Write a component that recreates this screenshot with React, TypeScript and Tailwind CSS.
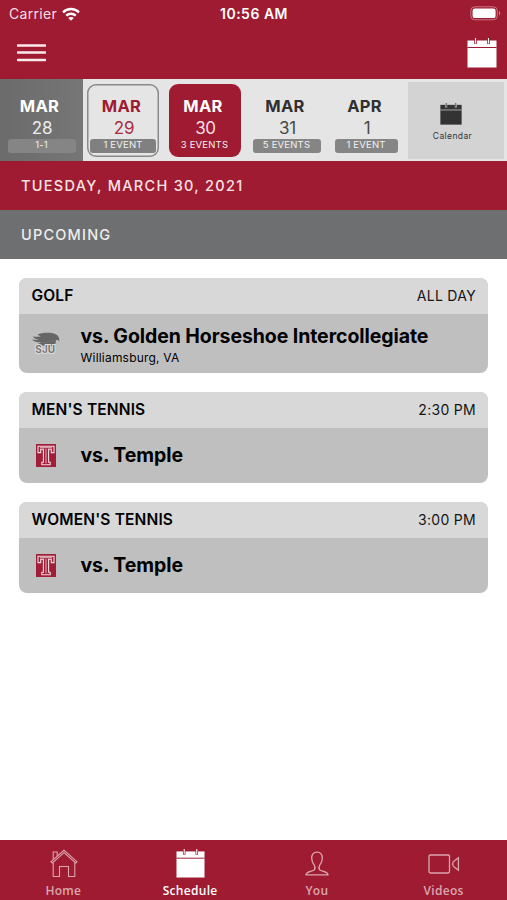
type Day = {
  month: string;
  day: string;
  label: string;
  cell: string;
  box: string;
  monthColor: string;
  dayColor: string;
  badge: string;
};

const days: Day[] = [
  {
    month: "MAR",
    day: "28",
    label: "1-1",
    cell: "w-[83px] bg-linear-to-r from-[#6b6b6b] to-[#767676]",
    box: "w-[72px]",
    monthColor: "text-white",
    dayColor: "text-[#ececec]",
    badge: "w-[68px] ml-px bg-[#858585]",
  },
  {
    month: "MAR",
    day: "29",
    label: "1 EVENT",
    cell: "w-[81px]",
    box: "w-[72px] rounded-[9px] inset-ring-[1.5px] inset-ring-[#8a8a8a]",
    monthColor: "text-[#9e1b32]",
    dayColor: "text-[#a52e42]",
    badge: "w-[66px] bg-[#808080]",
  },
  {
    month: "MAR",
    day: "30",
    label: "3 EVENTS",
    cell: "w-[82px]",
    box: "w-[72px] rounded-[9px] bg-[#9e1b32]",
    monthColor: "text-white",
    dayColor: "text-[#f6dfe2]",
    badge: "w-[66px]",
  },
  {
    month: "MAR",
    day: "31",
    label: "5 EVENTS",
    cell: "w-[82px]",
    box: "w-[72px]",
    monthColor: "text-[#303030]",
    dayColor: "text-[#484848]",
    badge: "w-[68px] bg-[#858585]",
  },
  {
    month: "APR",
    day: "1",
    label: "1 EVENT",
    cell: "w-[77px]",
    box: "w-[72px]",
    monthColor: "text-[#303030]",
    dayColor: "text-[#484848]",
    badge: "w-[63px] bg-[#858585]",
  },
];

const events = [
  {
    sport: "GOLF",
    time: "ALL DAY",
    title: "vs. Golden Horseshoe Intercollegiate",
    place: "Williamsburg, VA",
    logo: "hawk",
  },
  { sport: "MEN'S TENNIS", time: "2:30 PM", title: "vs. Temple", logo: "temple" },
  { sport: "WOMEN'S TENNIS", time: "3:00 PM", title: "vs. Temple", logo: "temple" },
];

const CalendarIcon = ({ className, line }: { className: string; line: string }) => (
  <svg viewBox="0 0 30 30" className={className}>
    <path d="M0.5 2.5H29.5V29.5H0.5Z" fill="currentColor" />
    <path d="M0.5 9.5H29.5" stroke={line} strokeWidth="1" />
    <path d="M8.5 1V6M21.5 1V6" stroke={line} strokeWidth="2.6" />
    <path d="M8.5 0V5.5M21.5 0V5.5" stroke="currentColor" strokeWidth="1.1" />
  </svg>
);

const TempleLogo = () => (
  <svg viewBox="0 0 20 23" className="ml-[17px] h-[23px] w-5">
    <rect width="20" height="23" rx="0.5" fill="#a11d38" />
    <path
      d="M2 2.2H18V8.6H15.3V5.2H12.6V18.2H14.2V20.8H5.8V18.2H7.4V5.2H4.7V8.6H2Z"
      fill="none"
      stroke="#f3dfe2"
      strokeWidth="1.1"
    />
    <path d="M4 3.7H16M10 5V19.3" stroke="#f3dfe2" strokeWidth="0.8" />
  </svg>
);

const HawkLogo = () => (
  <svg viewBox="0 0 28 22" className="ml-[13px] h-[22px] w-7">
    <path
      d="M5.5 2.6C9 .6 16.5.3 21 1.2C25 2 27.8 4.5 27.3 9.5C26.4 8 25 7.7 23.7 8.1C24.5 9.7 23.6 11.5 22 14.5C16 14 9 13.4 4.5 12.4C7 11.5 8.4 11 9.2 10.3C5.5 10.5 1.5 9.5 0 7.5C3 8 5.3 7.8 6.8 7.2C4 7 1 6 1.2 4.4C4 5.2 7 4.8 9 4.3C7.5 4 6.2 3.4 5.5 2.6Z"
      fill="#666"
    />
    <path d="M10 10.8C14 10.8 17 9 22 9" stroke="#7c7c7c" strokeWidth="0.6" fill="none" />
    <text
      x="13.2"
      y="20.6"
      textAnchor="middle"
      fontSize="10"
      fontWeight="700"
      fill="#777"
      stroke="#dcdcdc"
      strokeWidth="2"
      paintOrder="stroke"
      textLength="20"
    >
      SJU
    </text>
  </svg>
);

const HomeIcon = () => (
  <svg viewBox="0 0 28 30" className="ml-[2px] h-[30px] w-7" fill="none" stroke="currentColor" strokeWidth="1.1">
    <path d="M1 12.7L14 1.3L27 12.7L25.7 13.9L14 3.7L2.3 13.9Z" />
    <path d="M3.2 10.3V3H7.2V6.9" />
    <path d="M3.2 13.5V27.5H9.5V17.5H18.5V27.5H24.8V13.5" />
  </svg>
);

const PersonIcon = () => (
  <svg viewBox="0 0 24 26" className="h-[26px] w-6" fill="none" stroke="currentColor" strokeWidth="1.3">
    <path d="M12 1.2C8.3 1.2 6.6 3.8 6.7 7.2C6.8 10.3 7.8 12.4 9.2 14C10 15.3 10.2 17.6 9.3 18.8C8 20.4 1.2 20.2 1 23.8H23C22.8 20.2 16 20.4 14.7 18.8C13.8 17.6 14 15.3 14.8 14C16.2 12.4 17.2 10.3 17.3 7.2C17.4 3.8 15.7 1.2 12 1.2Z" />
  </svg>
);

const VideoIcon = () => (
  <svg viewBox="0 0 32 20" className="h-5 w-8" fill="none" stroke="currentColor" strokeWidth="1.3">
    <rect x="1" y="1" width="20.5" height="18" rx="1.4" />
    <path d="M30.4 3.8V16.2L26.2 13C24.2 12 24.2 8 26.2 7Z" />
  </svg>
);

const tabs = [
  { name: "Home", icon: <HomeIcon />, active: false },
  {
    name: "Schedule",
    icon: <CalendarIcon className="mb-px h-[29px] w-[29px]" line="#9e1b32" />,
    active: true,
  },
  { name: "You", icon: <PersonIcon />, active: false },
  { name: "Videos", icon: <VideoIcon />, active: false },
];

const App = () => {
  return (
    <div className="flex h-[900px] w-[507px] flex-col overflow-hidden bg-white font-['Inter','Liberation_Sans',sans-serif]">
      <header className="h-[79px] shrink-0 bg-[#9e1b32] text-white">
        <div className="grid h-[27px] grid-cols-3 items-center pr-1.5 pl-[9px]">
          <div className="flex items-center gap-[5px] text-[14px] tracking-[0.3px] text-[#f8dfe3]">
            Carrier
            <svg viewBox="0 0 18 14" className="h-3.5 w-[18px]" fill="none" stroke="#fff" strokeWidth="2.4">
              <path d="M1 5.3C5.5.9 12.5.9 17 5.3" />
              <path d="M4.2 8.7C6.9 6.1 11.1 6.1 13.8 8.7" />
              <path d="M6.2 11L9 13.8L11.8 11C10.2 9.6 7.8 9.6 6.2 11Z" fill="#fff" stroke="none" />
            </svg>
          </div>
          <div className="pr-[2px] text-center text-[14px] font-semibold tracking-[0.5px] whitespace-nowrap">
            10:56 AM
          </div>
          <svg viewBox="0 0 31 15" className="h-[15px] w-[31px] justify-self-end">
            <rect x="0.8" y="0.8" width="26.5" height="13" rx="4" fill="none" stroke="#c77886" strokeWidth="1" />
            <rect x="2.6" y="2.6" width="23" height="9.5" rx="2.2" fill="#fff" />
            <path d="M29 5V9.6C30.6 9 30.6 5.6 29 5Z" fill="#c77886" />
          </svg>
        </div>
        <div className="flex h-[51px] items-center justify-between pr-[10px] pl-[17px]">
          <svg viewBox="0 0 29 19" className="h-[19px] w-[29px]" stroke="#fbe9eb" strokeWidth="2.6" strokeLinecap="round">
            <path d="M1 2.5H28M1 9.5H28M1 17H28" />
          </svg>
          <CalendarIcon className="h-[30px] w-[30px]" line="#9e1b32" />
        </div>
      </header>

      <div className="flex h-[82px] shrink-0 bg-[#e5e5e5]">
        {days.map((d) => (
          <div key={d.month + d.day} className={`flex shrink-0 items-center justify-center pr-px ${d.cell}`}>
            <div className={`flex h-[73px] flex-col items-center ${d.box}`}>
              <div className={`mt-3 h-5 pr-[3px] text-[16.5px] leading-5 font-bold tracking-[0.3px] ${d.monthColor}`}>
                {d.month}
              </div>
              <div className={`mt-[2px] h-5 pl-[2px] text-[17px] leading-5 tracking-[-0.3px] ${d.dayColor}`}>
                {d.day}
              </div>
              <div
                className={`mt-px flex h-[14px] items-center justify-center rounded-[3px] text-[9.5px] tracking-[0.2px] whitespace-nowrap text-[#f2f2f2] ${d.badge}`}
              >
                {d.label}
              </div>
            </div>
          </div>
        ))}
        <div className="mt-[3px] ml-[3px] flex h-[77px] w-24 flex-col items-center bg-[#d3d3d3] pr-[11px] text-[#333]">
          <CalendarIcon className="mt-[21px] h-[22px] w-[22px]" line="#d3d3d3" />
          <span className="mt-[5px] pl-[4px] text-[8.5px] leading-3 tracking-[0.4px]">Calendar</span>
        </div>
      </div>

      <div className="flex h-[49px] shrink-0 items-center bg-[#9e1b32] pl-[21px] text-[14.5px] font-medium tracking-[1.3px] text-[#fbe3e5]">
        TUESDAY, MARCH 30, 2021
      </div>
      <div className="flex h-[49px] shrink-0 items-center bg-[#6d6f70] pl-[21px] text-[14.5px] font-medium tracking-[1.2px] text-[#ededed]">
        UPCOMING
      </div>

      <main className="flex flex-1 flex-col gap-[18.5px] px-[19px] pt-[18.5px]">
        {events.map((e) => (
          <div key={e.sport} className="overflow-hidden rounded-lg bg-[#bfbfbf] text-black">
            <div className="flex h-9 items-center justify-between bg-[#d8d8d8] pr-3 pl-[12.5px] text-[15px]">
              <span className="text-[15.5px] font-semibold tracking-[0.15px]">{e.sport}</span>
              <span className="text-[14px] tracking-[0.3px] text-[#151515]">{e.time}</span>
            </div>
            <div className={`flex items-center ${e.place ? "h-[59.5px]" : "h-[55.5px]"}`}>
              <div className="w-[61.5px]">{e.logo === "hawk" ? <HawkLogo /> : <TempleLogo />}</div>
              <div className={e.place ? "pt-[5px]" : ""}>
                <div className="text-[19.5px] leading-6 font-bold tracking-[-0.08px] whitespace-nowrap">{e.title}</div>
                {e.place && <div className="text-[12px] leading-[19px] tracking-[0.2px]">{e.place}</div>}
              </div>
            </div>
          </div>
        ))}
      </main>

      <nav className="grid h-[60px] shrink-0 grid-cols-4 bg-[#9e1b32]">
        {tabs.map((t) => (
          <div
            key={t.name}
            className={`flex flex-col items-center ${t.active ? "text-white" : "text-[#dca6ae]"}`}
          >
            <div className="mt-2 flex h-[31px] items-center">{t.icon}</div>
            <span className="mt-1 font-['Open_Sans','Noto_Sans',sans-serif] text-[12px] leading-4 font-semibold tracking-[0.3px]">
              {t.name}
            </span>
          </div>
        ))}
      </nav>
    </div>
  );
};

export default App;
